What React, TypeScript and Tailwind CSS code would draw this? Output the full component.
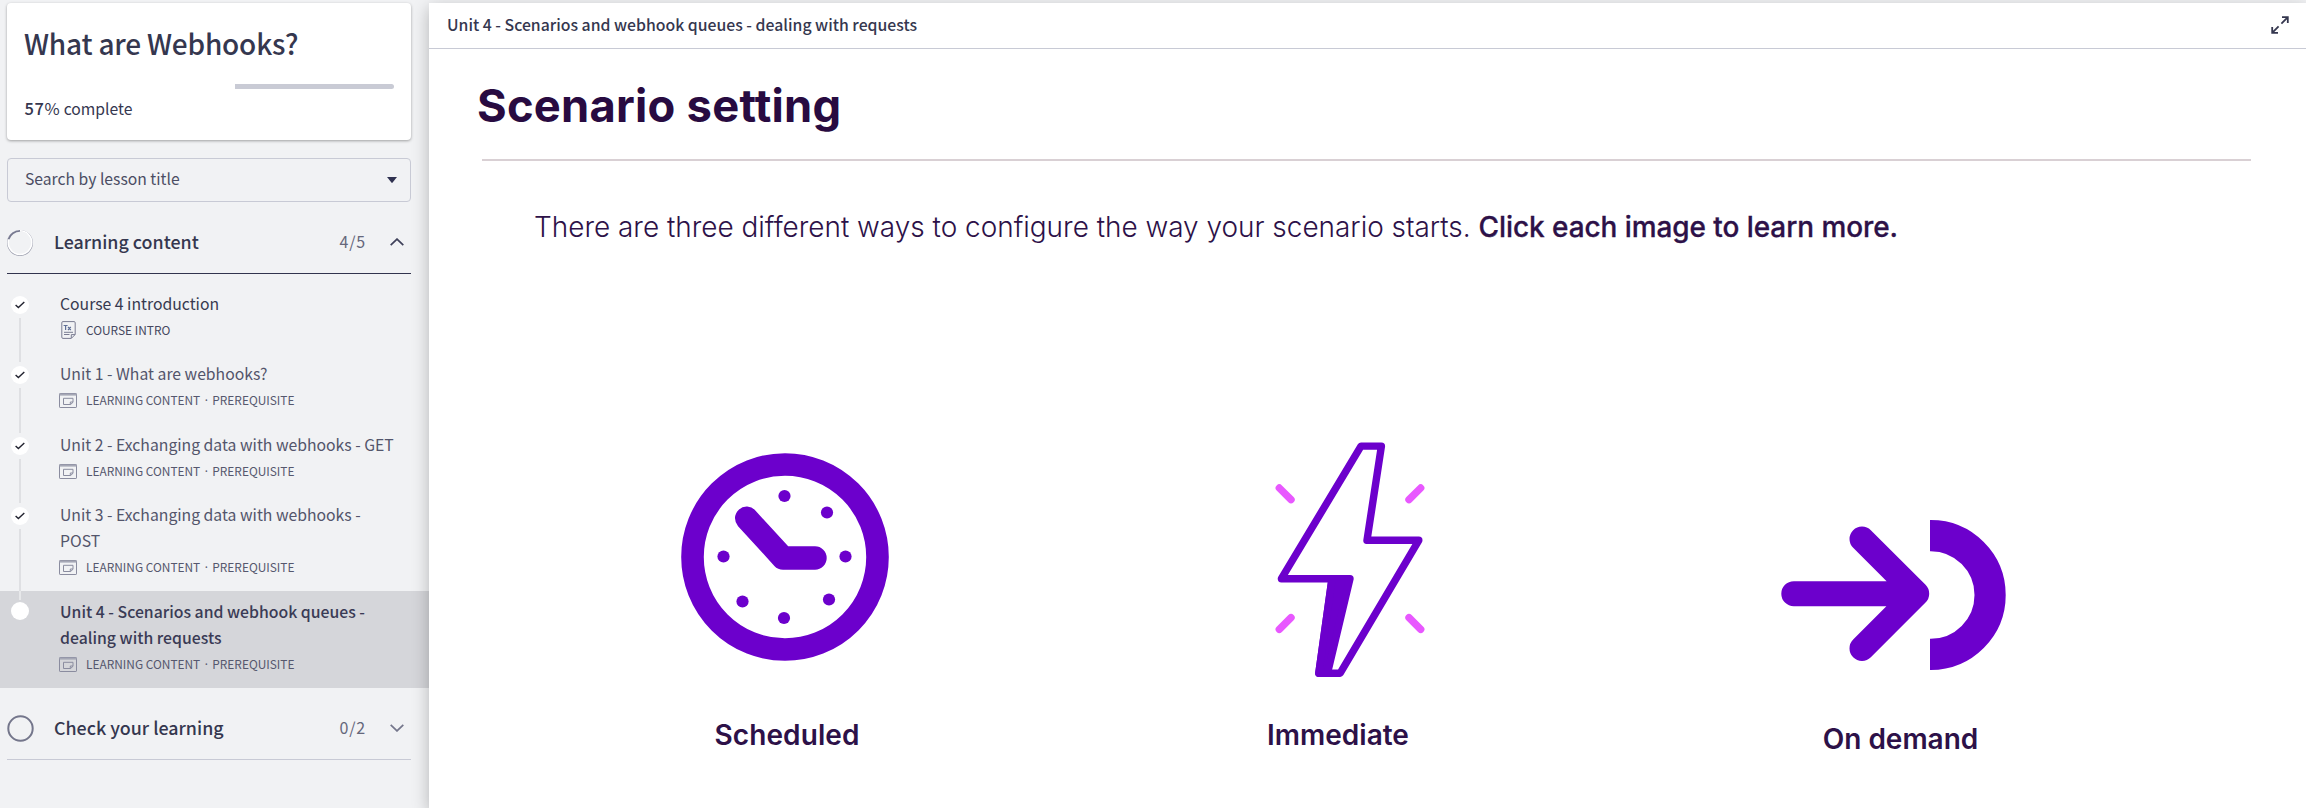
import React from "react";

type Lesson = {
  lines: string[];
  meta: string[];
  kind: "doc" | "module";
  done: boolean;
  active?: boolean;
  height: string;
};

const lessons: Lesson[] = [
  { lines: ["Course 4 introduction"], meta: ["COURSE INTRO"], kind: "doc", done: true, height: "h-[70px]" },
  { lines: ["Unit 1 - What are webhooks?"], meta: ["LEARNING CONTENT", "PREREQUISITE"], kind: "module", done: true, height: "h-[71px]" },
  { lines: ["Unit 2 - Exchanging data with webhooks - GET"], meta: ["LEARNING CONTENT", "PREREQUISITE"], kind: "module", done: true, height: "h-[70px]" },
  { lines: ["Unit 3 - Exchanging data with webhooks -", "POST"], meta: ["LEARNING CONTENT", "PREREQUISITE"], kind: "module", done: true, height: "h-[97px]" },
  { lines: ["Unit 4 - Scenarios and webhook queues -", "dealing with requests"], meta: ["LEARNING CONTENT", "PREREQUISITE"], kind: "module", done: false, active: true, height: "h-[97px]" },
];

function DocIcon() {
  return (
    <svg className="ml-px mr-[10px] h-[18px] w-[15px] shrink-0" viewBox="0 0 15 18" fill="none" stroke="#7a7c92">
      <path d="M2 .6H13a1.2 1.2 0 0 1 1.2 1.2V13.5L10.3 17.4H2A1.2 1.2 0 0 1 .8 16.2V1.8A1.2 1.2 0 0 1 2 .6Z" />
      <path d="M10.3 17.2V13.6H14M3 11.3H12M3 13.5H8.5" />
      <path d="M2.6 4.5H6.6M4.6 4.5V9M7 6L9.8 9M9.8 6L7 9" stroke="#5f6f96" strokeWidth="1.2" />
    </svg>
  );
}

function ModuleIcon() {
  return (
    <svg className="-ml-px mr-[9px] h-[15px] w-[18px] shrink-0" viewBox="0 0 18 15" fill="none" stroke="#8a8c9f">
      <rect x=".5" y=".5" width="17" height="14" rx=".6" />
      <path d="M.5 1.6H17.5" strokeWidth="2" stroke="#a5a7b5" />
      <path d="M4.5 5.3H14V9.3L11.6 11.5H4.5Z" />
      <path d="M14 9H11.3V11.5" />
    </svg>
  );
}

function LessonRow({ lesson, first, last }: { lesson: Lesson; first: boolean; last: boolean }) {
  return (
    <li className={`flex pr-[18px] ${lesson.height} ${lesson.active ? "bg-[#d5d6da]" : ""}`}>
      <div className="ml-[10px] flex w-[20px] shrink-0 flex-col items-center">
        <span className={`h-[9px] w-[2px] ${first ? "" : lesson.active ? "bg-[#e7e8ea]" : "bg-[#dfe0e3]"}`} />
        <span className={`flex size-[18px] shrink-0 items-center justify-center rounded-full bg-white ${lesson.active ? "mt-[2px]" : "mt-[4px]"}`}>
          {lesson.done && (
            <svg className="h-[8px] w-[10px]" viewBox="0 0 10 8" fill="none" stroke="#222330" strokeWidth="1.4">
              <path d="M.6 3.9L3.4 6.6L9.3 .9" />
            </svg>
          )}
        </span>
        {!last && <span className="mt-[4px] w-[2px] flex-1 bg-[#dfe0e3]" />}
      </div>
      <div className="ml-[30px] flex-1 pt-[8px]">
        {lesson.lines.map((line) => (
          <div
            key={line}
            className={`h-[26px] whitespace-nowrap leading-[26px] ${
              lesson.active ? "text-[15.8px] font-medium text-[#3a3b55]" : first ? "text-[15.75px] text-[#37394f]" : "text-[15.75px] text-[#53556b]"
            }`}
          >
            {line}
          </div>
        ))}
        <div className={`flex h-[20px] items-center text-[11.9px] leading-[20px] ${first ? "mt-[3px] text-[#46485f]" : "mt-[3px] text-[#56586e]"}`}>
          {lesson.kind === "doc" ? <DocIcon /> : <ModuleIcon />}
          <span>{lesson.meta[0]}</span>
          {lesson.meta[1] && (
            <>
              <span className="w-[12px] text-center font-['Noto_Sans',sans-serif]">·</span>
              <span>{lesson.meta[1]}</span>
            </>
          )}
        </div>
      </div>
    </li>
  );
}

function Sidebar() {
  return (
    <aside className="flex w-[429px] shrink-0 flex-col font-['Noto_Sans_CJK_SC',sans-serif] text-[#35374f]">
      <section className="ml-[7px] mt-[3px] h-[137px] w-[404px] rounded-[4px] bg-white px-[17px] pt-[22px] shadow-[0_1px_3px_rgba(0,0,0,0.35)]">
        <h1 className="text-[28px] font-medium leading-[36px] tracking-[-0.2px]">What are Webhooks?</h1>
        <div className="mt-[23px] flex h-[5px] w-[370px] justify-end rounded-full">
          <div className="h-full w-[43%] rounded-r-full bg-[#c9cbd5]" />
        </div>
        <p className="mt-[6px] pl-[0.5px] text-[15.7px] leading-[26px]">
          <span className="text-[16.5px] font-medium tracking-[0.6px]">57</span>
          <span className="text-[16.5px] tracking-[0.4px]">%</span> complete
        </p>
      </section>

      <div className="ml-[7px] mt-[18px] flex h-[44px] w-[404px] items-center justify-between rounded-[4px] border border-[#c8cad5] pl-[17px] pr-[13px] text-[15.7px] leading-[40px] text-[#4b4d63]">
        <span className="-mt-[2px]">Search by lesson title</span>
        <svg className="h-[6px] w-[10px]" viewBox="0 0 10 6" fill="#2f3150">
          <path d="M0 0H10L5.6 5.6Q5 6.2 4.4 5.6Z" />
        </svg>
      </div>

      <div className="ml-[7px] mt-[11px] flex h-[61px] w-[404px] items-center border-b border-[#32344e]">
        <svg className="mt-[-1px] size-[26px]" viewBox="0 0 26 26" fill="none">
          <circle cx="13" cy="13" r="12.4" stroke="#9fa1b0" strokeWidth="1.1" />
          <circle cx="13" cy="12.6" r="11.8" stroke="#fff" strokeWidth="1.5" />
          <path d="M13 .9A12.1 12.1 0 0 0 1.5 9.3" stroke="#777990" strokeWidth="1.8" />
        </svg>
        <h2 className="ml-[21px] mt-[-5px] flex-1 text-[17.85px] font-medium leading-[28px]">Learning content</h2>
        <span className="mr-[24px] mt-[-4px] text-[16px] tracking-[0.8px] text-[#65677b]">4/5</span>
        <svg className="mr-[7px] mt-[-3px] h-[8px] w-[14px]" viewBox="0 0 14 8" fill="none" stroke="#3f415a" strokeWidth="1.7">
          <path d="M.7 7.2L7 1.1L13.3 7.2" />
        </svg>
      </div>

      <ul className="mt-[9px]">
        {lessons.map((l, i) => (
          <LessonRow key={l.lines[0]} lesson={l} first={i === 0} last={i === lessons.length - 1} />
        ))}
      </ul>

      <div className="ml-[7px] flex h-[72px] w-[404px] items-center border-b border-[#c8cad5] pt-[9px]">
        <svg className="size-[27px]" viewBox="0 0 27 27" fill="none">
          <circle cx="13.5" cy="13.5" r="12.2" stroke="#74768b" strokeWidth="2" />
        </svg>
        <h2 className="ml-[20px] mt-[-3px] flex-1 text-[17.85px] font-medium leading-[28px]">Check your learning</h2>
        <span className="mr-[24px] mt-[-3px] text-[16px] tracking-[0.8px] text-[#65677b]">0/2</span>
        <svg className="mr-[7px] h-[8px] w-[14px]" viewBox="0 0 14 8" fill="none" stroke="#74768b" strokeWidth="1.7">
          <path d="M.7 .8L7 6.9L13.3 .8" />
        </svg>
      </div>
    </aside>
  );
}

function ClockArt() {
  const dots = [
    [103.5, 43], [146, 59.5], [164.5, 103.5], [148, 146.5],
    [103, 165], [61.5, 148.5], [42.5, 103.5],
  ];
  return (
    <svg className="h-[208px] w-[208px]" viewBox="0 0 208 208" fill="none" stroke="#6c00cc">
      <circle cx="104" cy="104" r="92.5" strokeWidth="22.6" />
      <path d="M65.7 65.3L102 105H134" strokeWidth="23.4" strokeLinecap="round" strokeLinejoin="round" />
      {dots.map(([x, y]) => (
        <circle key={`${x}-${y}`} cx={x} cy={y} r="6.1" fill="#6c00cc" stroke="none" />
      ))}
    </svg>
  );
}

function BoltArt() {
  return (
    <svg className="h-[236px] w-[150px]" viewBox="1275 442 150 236" fill="none" stroke="#6c00cc" strokeWidth="7.4" strokeLinecap="round" strokeLinejoin="round">
      <path d="M1361 446.1H1381.4L1367 540.3H1418.8L1340.2 673.2H1318.8L1332 578.7H1281.4Z" />
      <path d="M1332 578.7H1350L1327.5 673.2H1318.8Z" fill="#6c00cc" />
      <path d="M1279.3 488L1291 499.7M1420.7 488L1409 499.7M1279.3 629.3L1291 617.7M1420.7 629.3L1409 617.7" stroke="#e858ff" />
    </svg>
  );
}

function ArrowArt() {
  return (
    <svg className="h-[150px] w-[226px]" viewBox="1780 520 226 150" fill="none" stroke="#6c00cc">
      <path d="M1793.8 593.7H1916.5M1862 539L1916.7 593.7L1862 648.4" strokeWidth="25" strokeLinecap="round" strokeLinejoin="round" />
      <path d="M1930 535.6H1930.7A59.4 59.4 0 0 1 1930.7 654.4H1930" strokeWidth="31.2" />
    </svg>
  );
}

function Main() {
  return (
    <main className="z-10 mt-[3px] flex flex-1 flex-col bg-white shadow-[0_5px_16px_rgba(0,0,0,0.26)]">
      <header className="flex h-[46px] items-center justify-between border-b border-[#c8cad5] pl-[18px] pr-[17px]">
        <span className="mt-[-2px] font-['Noto_Sans_CJK_SC',sans-serif] text-[15.8px] font-medium leading-[24px] text-[#35374f]">
          Unit 4 - Scenarios and webhook queues - dealing with requests
        </span>
        <svg className="mt-[-2px] size-[18px]" viewBox="0 0 18 18" fill="none" stroke="#35374f" strokeWidth="1.8">
          <path d="M11 1.2H16.8V7M16.6 1.4L10.4 7.6M7 16.8H1.2V11M1.4 16.6L7.6 10.4" />
        </svg>
      </header>
      <div className="flex flex-1 flex-col font-['Inter',sans-serif] text-[#2d1148]">
        <h2 className="ml-[48px] mt-[27px] text-[45.3px] font-bold leading-[60px] tracking-[0.25px] text-[#280b41]">Scenario setting</h2>
        <div className="ml-[53px] mt-[23px] h-[2px] w-[1769px] bg-[#d9d0d4]" />
        <p className="ml-[105px] mt-[46px] whitespace-nowrap text-[27.93px] font-light leading-[40px]">
          There are three different ways to configure the way your scenario starts.{" "}
          <span className="font-medium tracking-[-0.04px] [-webkit-text-stroke:0.3px_#2d1148]">Click each image to learn more.</span>
        </p>
        <div className="mt-[195px] flex items-start text-[28px] font-semibold leading-[36px]">
          <figure className="ml-[252px] mt-[11px] flex w-[208px] flex-col items-center">
            <ClockArt />
            <figcaption className="mt-[56px] pl-[4px] tracking-[0.1px]">Scheduled</figcaption>
          </figure>
          <figure className="ml-[386px] flex w-[150px] flex-col items-center">
            <BoltArt />
            <figcaption className="mt-[39px] mr-[24px]">Immediate</figcaption>
          </figure>
          <figure className="ml-[355px] mt-[78px] flex w-[226px] flex-col items-center">
            <ArrowArt />
            <figcaption className="mt-[51px] pl-[15px]">On demand</figcaption>
          </figure>
        </div>
      </div>
    </main>
  );
}

export default function App() {
  return (
    <div className="flex h-[808px] w-full overflow-hidden bg-[#f1f2f4]">
      <Sidebar />
      <Main />
    </div>
  );
}
